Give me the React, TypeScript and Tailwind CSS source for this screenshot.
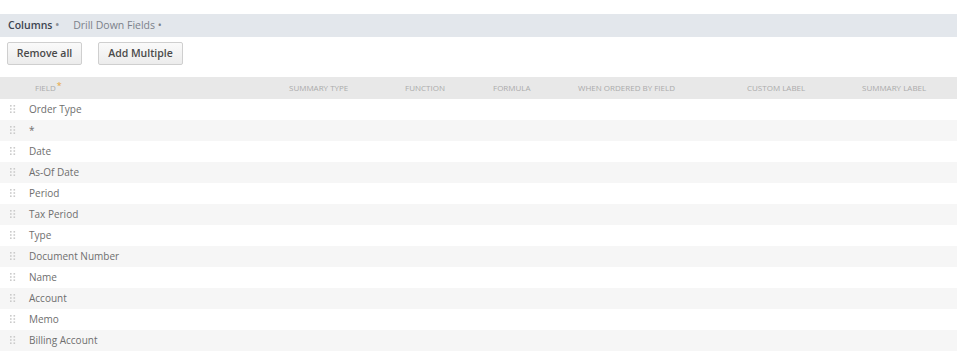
import React from 'react';

const fields = [
  'Order Type',
  '*',
  'Date',
  'As-Of Date',
  'Period',
  'Tax Period',
  'Type',
  'Document Number',
  'Name',
  'Account',
  'Memo',
  'Billing Account',
];

const headers = ['Summary Type', 'Function', 'Formula', 'When Ordered By Field', 'Custom Label', 'Summary Label'];

const grid = 'grid grid-cols-[29px_260px_116px_88px_85px_169px_115px_1fr]';

const DragHandle: React.FC = () => (
  <svg width="6" height="9" viewBox="0 0 6 9" className="ml-[10px]">
    {[0, 1, 2].map((r) =>
      [0, 1].map((c) => (
        <rect key={`${r}-${c}`} x={c * 3.5} y={r * 3.2} width="1.6" height="1.6" fill="#cbcbcb" />
      ))
    )}
  </svg>
);

const App: React.FC = () => {
  return (
    <div className="w-[970px] h-[358px] bg-white overflow-hidden font-['Open_Sans',sans-serif]">
      <div className="w-[957px] pt-[14px]">
        {/* Tabs */}
        <div className="h-[23px] bg-[#e3e7ec] flex items-center pl-[8px] gap-[14px] text-[10.5px]">
          <span className="font-semibold text-[#3d4450]">
            Columns <span className="text-[#8a8f96]">•</span>
          </span>
          <span className="text-[#7b818a]">
            Drill Down Fields <span>•</span>
          </span>
        </div>

        {/* Buttons */}
        <div className="flex gap-[16px] pl-[7px] pt-[5px] h-[40px]">
          <button className="h-[23px] w-[75px] border border-[#cfcfcf] rounded-[2px] bg-gradient-to-b from-[#fafafa] to-[#ececec] text-[10.5px] font-semibold text-[#4a4a4a]">
            Remove all
          </button>
          <button className="h-[23px] w-[85px] border border-[#cfcfcf] rounded-[2px] bg-gradient-to-b from-[#fafafa] to-[#ececec] text-[10.5px] font-semibold text-[#4a4a4a]">
            Add Multiple
          </button>
        </div>

        {/* Header */}
        <div className={`${grid} h-[22px] bg-[#e8e8e8] items-center text-[8px] uppercase text-[#ababab]`}>
          <span />
          <span className="pl-[6px]">
            Field<span className="text-[#e7a53a] text-[9px] relative -top-[2px] ml-[1px]">*</span>
          </span>
          {headers.map((h) => (
            <span key={h}>{h}</span>
          ))}
        </div>

        {/* Rows */}
        {fields.map((f, i) => (
          <div
            key={f}
            className={`${grid} h-[21px] items-center text-[10px] text-[#6e6e6e] ${i % 2 === 1 ? 'bg-[#f6f6f6]' : 'bg-white'}`}
          >
            <DragHandle />
            <span>{f}</span>
          </div>
        ))}
      </div>
    </div>
  );
};

export default App;
